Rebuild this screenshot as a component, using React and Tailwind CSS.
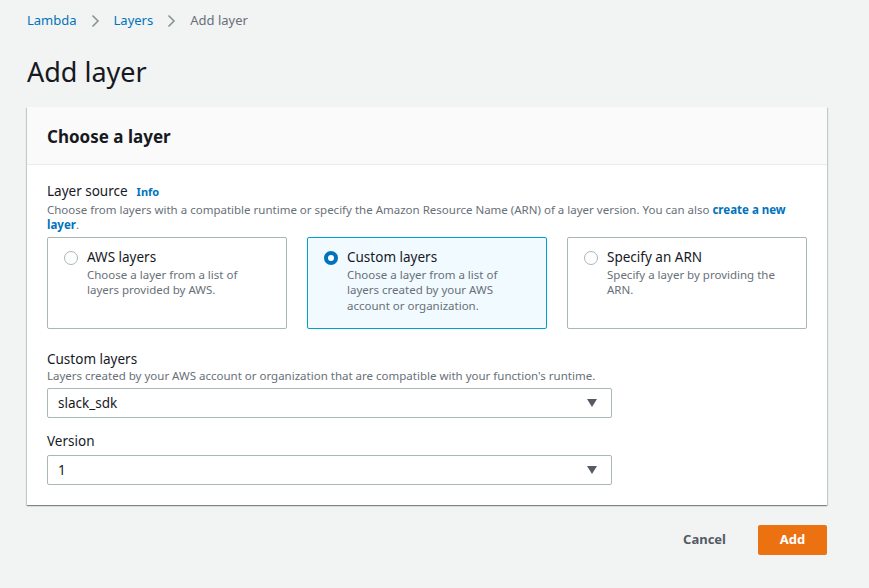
import React from 'react';

function Chevron() {
  return (
    <svg className="w-4 h-4 ml-[10px] mr-[11px] text-[#879596]" viewBox="0 0 16 16" fill="none" stroke="currentColor" strokeWidth="1.6">
      <path d="M5.5 2.5l5.5 5.5-5.5 5.5" />
    </svg>
  );
}

function Radio({ checked }) {
  if (checked) {
    return <span className="mt-[3px] w-[14px] h-[14px] rounded-full border-[4px] border-[#0073bb] bg-white shrink-0" />;
  }
  return <span className="mt-[3px] w-[14px] h-[14px] rounded-full border border-[#aab7b8] bg-white shrink-0" />;
}

function Tile({ title, desc, checked }) {
  return (
    <div
      className={
        checked
          ? 'h-[92px] border border-[#00a1c9] bg-[#f1faff] rounded-[2px] pl-[16px] pr-4 pt-[10px] flex gap-[9px]'
          : 'h-[92px] border border-[#aab7b8] bg-white rounded-[2px] pl-[16px] pr-4 pt-[10px] flex gap-[9px]'
      }
    >
      <Radio checked={checked} />
      <div>
        <div className="text-[13.5px] leading-[19px] text-[#16191f]">{title}</div>
        <div className="text-[11.5px] leading-[15.5px] text-[#687078]">{desc}</div>
      </div>
    </div>
  );
}

function Select({ value }) {
  return (
    <div className="w-[565px] h-[30px] border border-[#aab7b8] bg-white rounded-[2px] flex items-center justify-between pl-[10px] pr-[13px]">
      <span className="text-[13.5px] text-[#16191f]">{value}</span>
      <svg className="w-[12px] h-[10px] text-[#545b64]" viewBox="0 0 12 10" fill="currentColor">
        <path d="M1 1h10L6 9z" />
      </svg>
    </div>
  );
}

export default function App() {
  return (
    <div className="min-h-[588px] bg-[#f2f3f3] px-[27px] pt-[11px] font-['Noto_Sans',sans-serif] text-[#16191f]">
      <nav className="flex items-center text-[13px] h-[20px]">
        <span className="text-[#0073bb]">Lambda</span>
        <Chevron />
        <span className="text-[#0073bb]">Layers</span>
        <Chevron />
        <span className="text-[#687078]">Add layer</span>
      </nav>

      <h1 className="text-[27px] leading-[34px] mt-[24px] mb-[18px] text-[#16191f]">Add layer</h1>

      <div className="w-[800px] bg-white shadow-[0_1px_1px_0_rgba(0,28,36,0.3),1px_1px_1px_0_rgba(0,28,36,0.15),-1px_1px_1px_0_rgba(0,28,36,0.15)]">
        <div className="h-[58px] bg-[#fafafa] border-b border-[#eaeded] flex items-center px-[20px] pt-[2px]">
          <h2 className="text-[17px] font-bold text-[#16191f]">Choose a layer</h2>
        </div>

        <div className="px-[20px] pt-[17px] pb-[20px]">
          <div className="flex items-baseline gap-[9px]">
            <span className="text-[13.5px] leading-[18px]">Layer source</span>
            <span className="text-[11px] font-bold text-[#0073bb]">Info</span>
          </div>
          <div className="text-[11.5px] leading-[15.5px] text-[#687078] mt-[1px]">
            <div>
              Choose from layers with a compatible runtime or specify the Amazon Resource Name (ARN) of a layer version. You can also{' '}
              <span className="font-bold text-[#0073bb]">create a new</span>
            </div>
            <div>
              <span className="font-bold text-[#0073bb]">layer</span>.
            </div>
          </div>

          <div className="grid grid-cols-3 gap-[20px] mt-[4px] w-[760px]">
            <Tile title="AWS layers" desc="Choose a layer from a list of layers provided by AWS." />
            <Tile
              checked
              title="Custom layers"
              desc="Choose a layer from a list of layers created by your AWS account or organization."
            />
            <Tile title="Specify an ARN" desc="Specify a layer by providing the ARN." />
          </div>

          <div className="mt-[21px]">
            <div className="text-[13.5px] leading-[18px]">Custom layers</div>
            <div className="text-[11.5px] leading-[15.5px] text-[#687078] mb-[5px]">
              Layers created by your AWS account or organization that are compatible with your function's runtime.
            </div>
            <Select value="slack_sdk" />
          </div>

          <div className="mt-[14px]">
            <div className="text-[13.5px] leading-[18px] mb-[5px]">Version</div>
            <Select value="1" />
          </div>
        </div>
      </div>

      <div className="w-[800px] flex justify-end items-center mt-[20px] gap-[32px]">
        <span className="text-[13px] font-bold text-[#545b64]">Cancel</span>
        <button className="w-[69px] h-[30px] bg-[#ec7211] rounded-[2px] text-white text-[13px] font-bold">Add</button>
      </div>
    </div>
  );
}
